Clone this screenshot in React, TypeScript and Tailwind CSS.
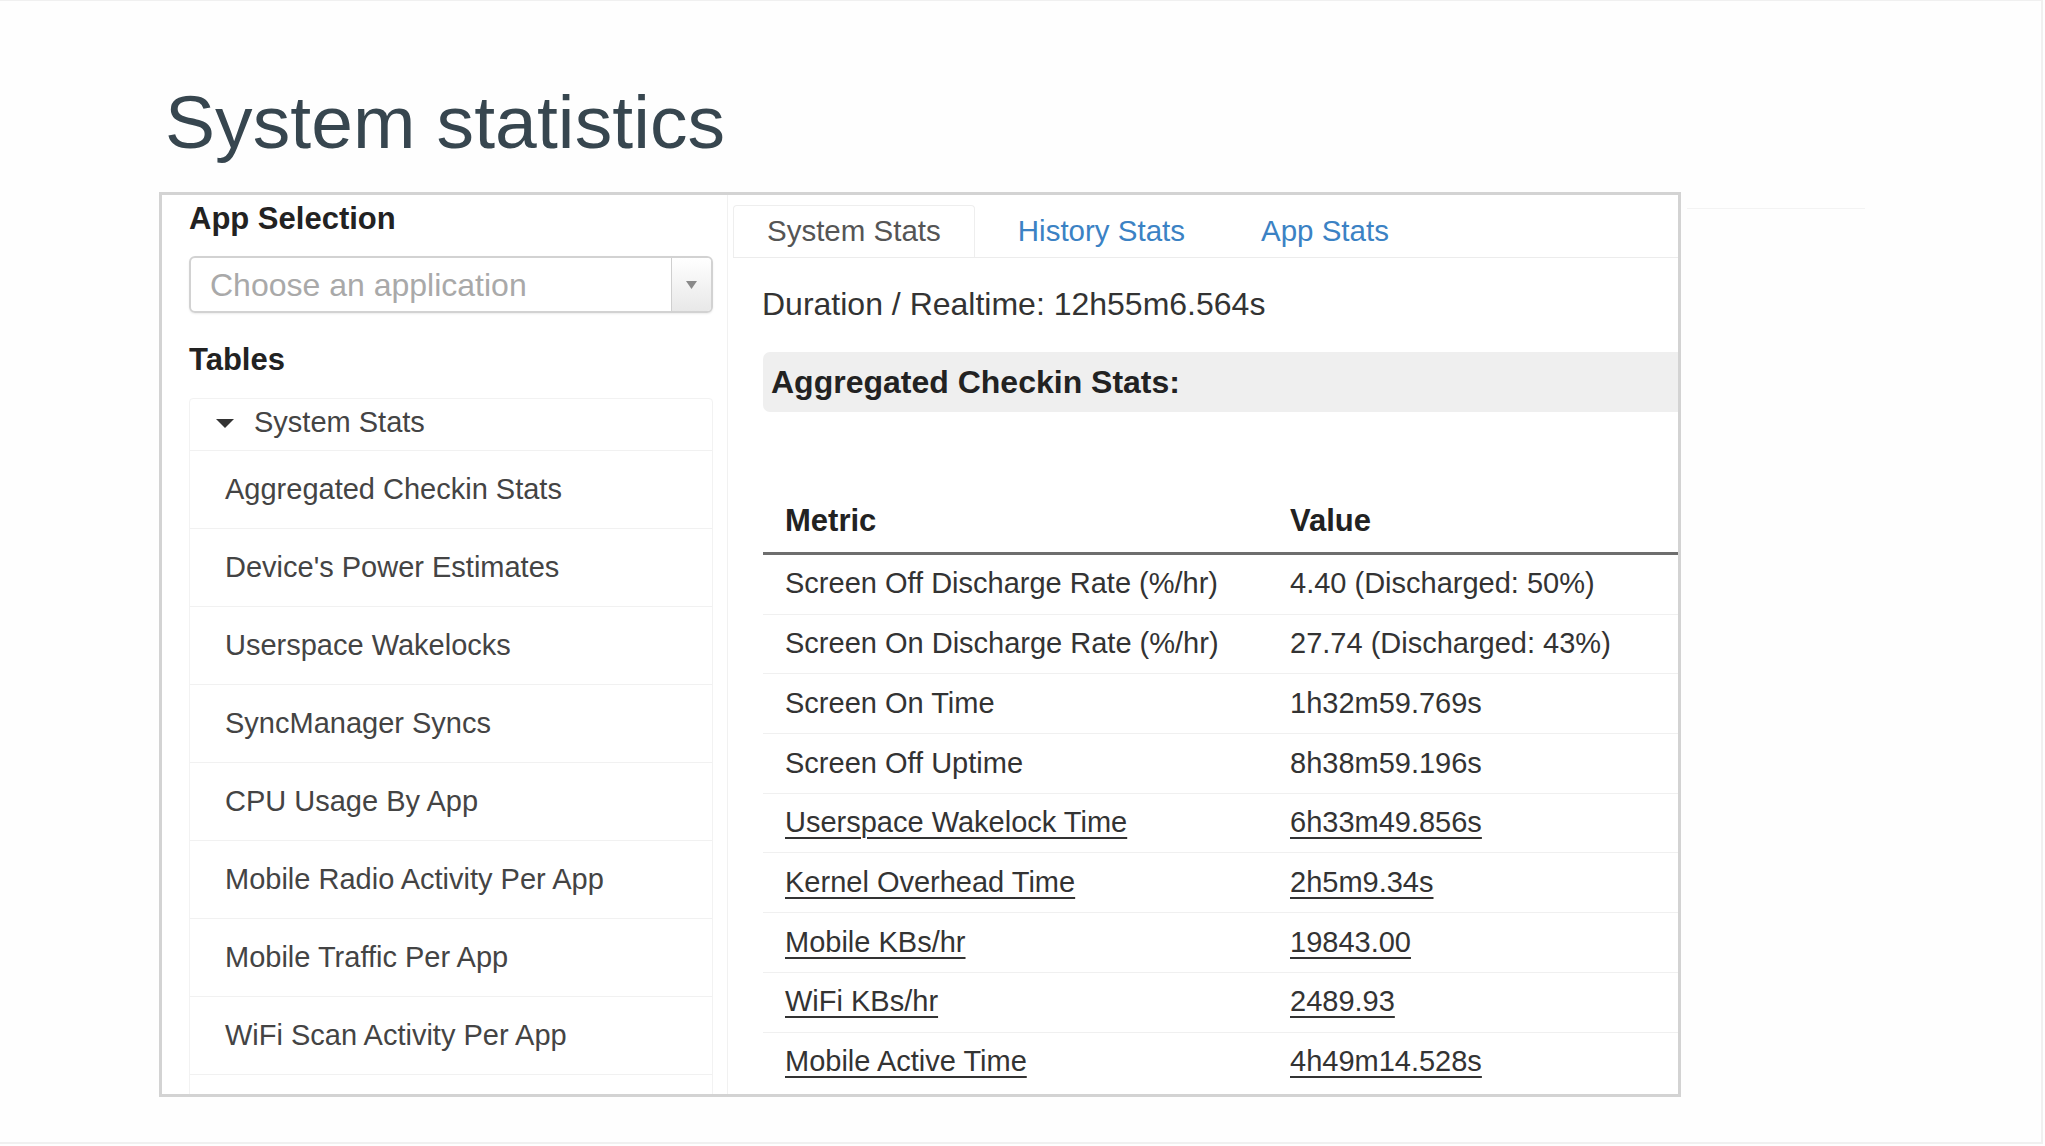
import React from "react";

const FONT = { fontFamily: '"Liberation Sans", Arial, Helvetica, sans-serif' };

const treeItems = [
  "Aggregated Checkin Stats",
  "Device's Power Estimates",
  "Userspace Wakelocks",
  "SyncManager Syncs",
  "CPU Usage By App",
  "Mobile Radio Activity Per App",
  "Mobile Traffic Per App",
  "WiFi Scan Activity Per App",
];

const rows: { m: string; v: string; link?: boolean }[] = [
  { m: "Screen Off Discharge Rate (%/hr)", v: "4.40 (Discharged: 50%)" },
  { m: "Screen On Discharge Rate (%/hr)", v: "27.74 (Discharged: 43%)" },
  { m: "Screen On Time", v: "1h32m59.769s" },
  { m: "Screen Off Uptime", v: "8h38m59.196s" },
  { m: "Userspace Wakelock Time", v: "6h33m49.856s", link: true },
  { m: "Kernel Overhead Time", v: "2h5m9.34s", link: true },
  { m: "Mobile KBs/hr", v: "19843.00", link: true },
  { m: "WiFi KBs/hr", v: "2489.93", link: true },
  { m: "Mobile Active Time", v: "4h49m14.528s", link: true },
];

export default function App() {
  return (
    <div
      style={FONT}
      className="w-[2045px] h-[1146px] bg-[#fefefe] overflow-hidden text-[#333]"
    >
      <div className="w-[2043px] h-[1144px] border-r-2 border-b-2 border-t border-[#f0f0f0] pl-[159px]">
        <h1 className="ml-[6px] mt-[85px] text-[75px] leading-[73px] text-[#37464f] font-normal tracking-[0.1px]">
          System statistics
        </h1>
        <div className="flex mt-[33px]">
          <div className="w-[1522px] h-[905px] border-[3px] border-[#d3d3d3] bg-white overflow-hidden flex">
            {/* Left column */}
            <div className="w-[566px] shrink-0 h-full border-r border-[#f1f1f1] pl-[27px] pr-[14px]">
              <div className="pt-[4px] text-[31px] leading-[40px] font-bold text-[#222]">
                App Selection
              </div>
              <div className="mt-[17px] h-[57px] flex border-2 border-[#d2d2d2] rounded-[6px] shadow-[0_1px_2px_rgba(0,0,0,0.08)] overflow-hidden">
                <div className="flex-1 flex items-center pl-[19px] text-[32px] text-[#a9a9a9]">
                  Choose an application
                </div>
                <div className="w-[40px] border-l border-[#cfcfcf] bg-gradient-to-b from-[#ffffff] to-[#e8e8e8] flex items-center justify-center">
                  <svg width="11" height="8" viewBox="0 0 11 8">
                    <path d="M0 0 L11 0 L5.5 8 Z" fill="#8a8a8a" />
                  </svg>
                </div>
              </div>
              <div className="mt-[27px] text-[31px] leading-[40px] font-bold text-[#222]">
                Tables
              </div>
              <div className="mt-[18px] border border-[#f2f2f2] rounded-[4px]">
                <div className="h-[51px] flex items-center pl-[26px] pb-[3px] text-[29px] text-[#444]">
                  <svg width="18" height="9" viewBox="0 0 18 9" className="mr-[20px]">
                    <path d="M0 0 L18 0 L9 9 Z" fill="#333" />
                  </svg>
                  System Stats
                </div>
                {treeItems.map((t) => (
                  <div
                    key={t}
                    className="h-[78px] border-t border-[#f1f1f1] flex items-center pl-[35px] text-[29px] text-[#444]"
                  >
                    {t}
                  </div>
                ))}
                <div className="h-[78px] border-t border-[#f1f1f1]" />
              </div>
            </div>

            {/* Right column */}
            <div className="flex-1 min-w-0 h-full pl-[35px]">
              <div className="-ml-[30px] pt-[10px] flex gap-[10px] border-b border-[#ececec]">
                <div className="h-[52px] px-[33px] flex items-center border border-b-0 border-[#eeeeee] rounded-t-[4px] bg-white -mb-px text-[29.5px] text-[#555]">
                  System Stats
                </div>
                <div className="h-[52px] px-[33px] flex items-center text-[29.5px] text-[#3b82c4]">
                  History Stats
                </div>
                <div className="h-[52px] px-[33px] flex items-center text-[29.5px] text-[#3b82c4]">
                  App Stats
                </div>
              </div>
              <div className="mt-[26px] -ml-[1px] text-[32px] leading-[40px] text-[#333]">
                Duration / Realtime: 12h55m6.564s
              </div>
              <div className="mt-[28px] h-[60px] rounded-l-[7px] bg-[#efefef] flex items-center pl-[8px] text-[32px] font-bold text-[#222]">
                Aggregated Checkin Stats:
              </div>
              <div className="mt-[89px] flex pb-[11px] border-b-[3px] border-[#6e6e6e] text-[31px] leading-[40px] font-bold text-[#222]">
                <div className="w-[505px] pl-[22px]">Metric</div>
                <div className="pl-[22px]">Value</div>
              </div>
              <div className="-mt-[1px]">
                {rows.map((r, i) => (
                  <div
                    key={r.m}
                    className={
                      "flex items-center h-[59.7px] text-[29px] text-[#333] " +
                      (i === 0 ? "" : "border-t border-[#f0f0f0]")
                    }
                  >
                    <div className="w-[505px] pl-[22px]">
                      {r.link ? (
                        <span className="underline decoration-2 underline-offset-[5px]">{r.m}</span>
                      ) : (
                        r.m
                      )}
                    </div>
                    <div className="pl-[22px]">
                      {r.link ? (
                        <span className="underline decoration-2 underline-offset-[5px]">{r.v}</span>
                      ) : (
                        r.v
                      )}
                    </div>
                  </div>
                ))}
              </div>
            </div>
          </div>
          <div className="ml-[6px] mt-[16px] w-[178px] h-0 border-t border-[#f3f3f3]" />
        </div>
      </div>
    </div>
  );
}
